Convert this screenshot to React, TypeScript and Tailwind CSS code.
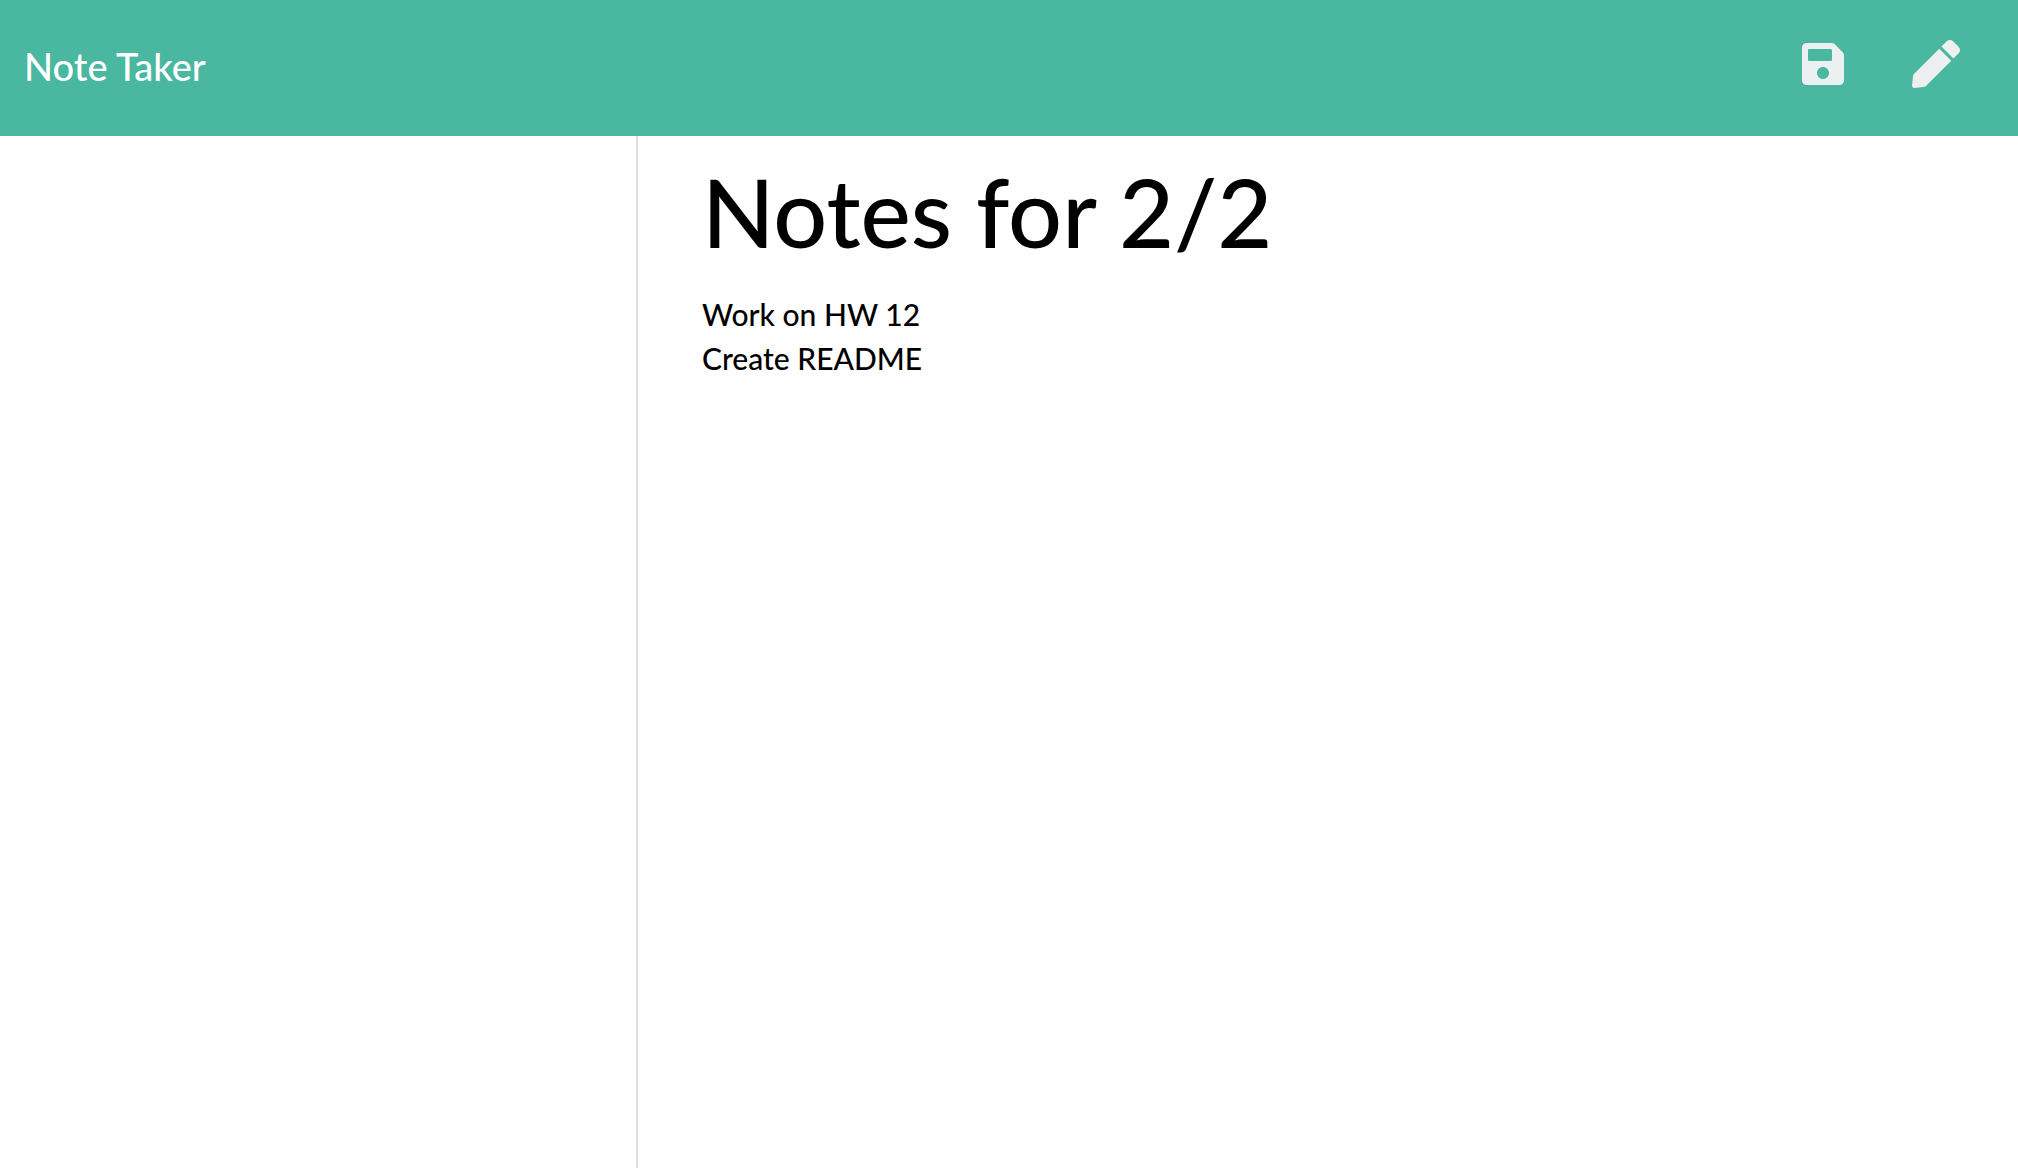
import { useState } from "react";
import { FaSave, FaPen } from "react-icons/fa";

export default function App() {
  const [title, setTitle] = useState("Notes for 2/2");
  const [body, setBody] = useState("Work on HW 12\nCreate README");

  return (
    <div className="flex min-h-screen flex-col bg-white font-[Lato,sans-serif] font-medium text-black">
      <nav className="flex h-[136px] items-center justify-between bg-[#4ab8a0] pr-[58px] pb-2 pl-6">
        <a href="#" className="pt-1 text-[38px] leading-[56px] text-white">
          Note Taker
        </a>
        <div className="flex items-center gap-[65px] text-[48px] text-[#ecf0f1]">
          <button type="button" aria-label="Save note">
            <FaSave />
          </button>
          <button type="button" aria-label="New note">
            <FaPen />
          </button>
        </div>
      </nav>
      <main className="grid grow grid-cols-[638px_1fr]">
        <aside aria-label="Saved notes" className="border-r-2 border-[#dfdfdf]" />
        <section className="flex flex-col px-16 pt-7">
          <input
            aria-label="Note title"
            value={title}
            onChange={(e) => setTitle(e.target.value)}
            className="h-[94px] w-full text-[95px] outline-none"
          />
          <textarea
            aria-label="Note text"
            value={body}
            onChange={(e) => setBody(e.target.value)}
            className="mt-[34px] w-full grow resize-none text-[30px] leading-[44px] outline-none"
          />
        </section>
      </main>
    </div>
  );
}
